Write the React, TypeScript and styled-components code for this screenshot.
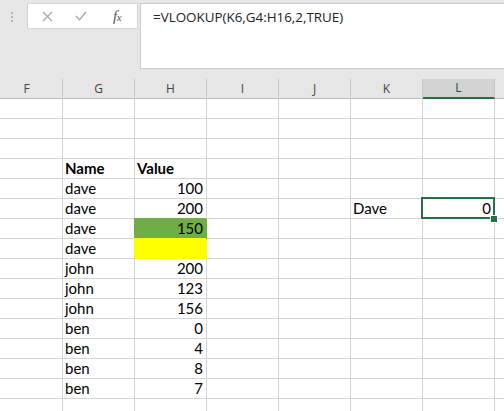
import React from "react";
import styled, { createGlobalStyle, css } from "styled-components";

const Global = createGlobalStyle`
  html, body { margin: 0; padding: 0; background: #ffffff; }
  * { box-sizing: border-box; }
`;

const GREEN = "#217346";
const GRID = "#d4d4d4";

const Window = styled.div`
  width: 504px;
  height: 411px;
  overflow: hidden;
  background: #ffffff;
  display: flex;
  flex-direction: column;
`;

const TopBar = styled.div`
  height: 79px;
  flex: none;
  background: #e6e6e6;
  display: flex;
  align-items: flex-start;
  padding-top: 3px;
`;

const Grip = styled.div`
  width: 27px;
  height: 26px;
  display: flex;
  flex-direction: column;
  align-items: flex-start;
  padding: 9px 0 0 11px;
  gap: 2px;
`;

const Dot = styled.span`
  width: 2px;
  height: 2px;
  background: #b4b4b4;
`;

const NameBox = styled.div`
  width: 111px;
  height: 26px;
  background: #ffffff;
  border: 1px solid #d6d6d6;
  display: flex;
  align-items: center;
  padding-left: 2px;
`;

const IconSlot = styled.div<{ $w: number }>`
  width: ${(p) => p.$w}px;
  height: 24px;
  display: flex;
  align-items: center;
  justify-content: center;
`;

const Fx = styled.span`
  font-family: "Liberation Serif", serif;
  font-style: italic;
  font-size: 15px;
  color: #555555;
  letter-spacing: -0.5px;
  line-height: 1;
  & > small {
    font-size: 11px;
  }
`;

const FormulaBox = styled.div`
  flex: 1;
  margin-left: 2px;
  margin-right: -10px;
  height: 66px;
  background: #ffffff;
  border: 1px solid #cbcbcb;
  padding: 3px 0 0 12px;
  font-family: "Open Sans", sans-serif;
  font-size: 13.4px;
  line-height: 20px;
  color: #222222;
`;

const Sheet = styled.div`
  flex: 1;
  overflow: hidden;
`;

const Grid = styled.div`
  display: grid;
  grid-template-columns: repeat(8, 72px);
  grid-auto-rows: 20px;
  margin-left: -9px;
  width: 576px;
`;

const ColHeader = styled.div<{ $active?: boolean }>`
  height: 20px;
  background: #e6e6e6;
  border-right: 1px solid #c9c9c9;
  border-bottom: 1px solid #bdbdbd;
  font-family: "Open Sans", sans-serif;
  font-size: 12px;
  line-height: 19px;
  text-align: center;
  color: #444444;
  ${(p) =>
    p.$active &&
    css`
      background: #d2d2d2;
      border-bottom: 2px solid ${GREEN};
      line-height: 18px;
      color: #2e4a3a;
    `}
`;

const Cell = styled.div<{
  $align?: "left" | "right";
  $bold?: boolean;
  $fill?: string;
  $selected?: boolean;
}>`
  position: relative;
  height: 20px;
  border-right: 1px solid ${GRID};
  border-bottom: 1px solid ${GRID};
  font-family: "Lato", "Liberation Sans", sans-serif;
  font-size: 15px;
  line-height: 19px;
  color: #000000;
  white-space: nowrap;
  padding: 0 3px 0 2px;
  text-align: ${(p) => p.$align ?? "left"};
  font-weight: ${(p) => (p.$bold ? 700 : 400)};
  ${(p) =>
    p.$fill &&
    css`
      background: ${p.$fill};
      border-color: ${p.$fill};
      box-shadow: -1px -1px 0 0 ${p.$fill};
    `}
  ${(p) =>
    p.$selected &&
    css`
      z-index: 1;
      &::after {
        content: "";
        position: absolute;
        top: -2px;
        left: -2px;
        right: -1px;
        bottom: -1px;
        border: 2px solid ${GREEN};
        pointer-events: none;
      }
    `}
`;

const FillHandle = styled.span`
  position: absolute;
  left: 68px;
  top: 17px;
  width: 6px;
  height: 6px;
  background: ${GREEN};
  box-shadow: 0 0 0 1px #ffffff;
  z-index: 2;
`;

type CellData = {
  text?: string;
  align?: "left" | "right";
  bold?: boolean;
  fill?: string;
  selected?: boolean;
};

const COLS = ["F", "G", "H", "I", "J", "K", "L", ""];

const data: Record<string, CellData> = {
  "G4": { text: "Name", bold: true },
  "H4": { text: "Value", bold: true },
  "G5": { text: "dave" },
  "H5": { text: "100", align: "right" },
  "G6": { text: "dave" },
  "H6": { text: "200", align: "right" },
  "K6": { text: "Dave" },
  "L6": { text: "0", align: "right", selected: true },
  "G7": { text: "dave" },
  "H7": { text: "150", align: "right", fill: "#70ad47" },
  "G8": { text: "dave" },
  "H8": { fill: "#ffff00" },
  "G9": { text: "john" },
  "H9": { text: "200", align: "right" },
  "G10": { text: "john" },
  "H10": { text: "123", align: "right" },
  "G11": { text: "john" },
  "H11": { text: "156", align: "right" },
  "G12": { text: "ben" },
  "H12": { text: "0", align: "right" },
  "G13": { text: "ben" },
  "H13": { text: "4", align: "right" },
  "G14": { text: "ben" },
  "H14": { text: "8", align: "right" },
  "G15": { text: "ben" },
  "H15": { text: "7", align: "right" },
};

const CrossIcon = () => (
  <svg width="11" height="11" viewBox="0 0 11 11">
    <path d="M1 1 L10 10 M10 1 L1 10" stroke="#a8a8a8" strokeWidth="1.3" fill="none" />
  </svg>
);

const CheckIcon = () => (
  <svg width="12" height="10" viewBox="0 0 12 10">
    <path d="M1 5 L4.5 8.8 L11 1" stroke="#a8a8a8" strokeWidth="1.4" fill="none" />
  </svg>
);

export default function App() {
  const rows = Array.from({ length: 16 }, (_, i) => i + 1);
  return (
    <>
      <Global />
      <Window>
        <TopBar>
          <Grip>
            <Dot />
            <Dot />
            <Dot />
          </Grip>
          <NameBox>
            <IconSlot $w={34}>
              <CrossIcon />
            </IconSlot>
            <IconSlot $w={34}>
              <CheckIcon />
            </IconSlot>
            <IconSlot $w={38}>
              <Fx>
                f<small>x</small>
              </Fx>
            </IconSlot>
          </NameBox>
          <FormulaBox>=VLOOKUP(K6,G4:H16,2,TRUE)</FormulaBox>
        </TopBar>
        <Sheet>
          <Grid>
            {COLS.map((c, i) => (
              <ColHeader key={"h" + i} $active={c === "L"}>
                {c}
              </ColHeader>
            ))}
            {rows.map((r) =>
              COLS.map((c, i) => {
                const d = data[c + r];
                return (
                  <Cell
                    key={r + "-" + i}
                    $align={d?.align}
                    $bold={d?.bold}
                    $fill={d?.fill}
                    $selected={d?.selected}
                  >
                    {d?.text}
                    {d?.selected && <FillHandle />}
                  </Cell>
                );
              })
            )}
          </Grid>
        </Sheet>
      </Window>
    </>
  );
}
